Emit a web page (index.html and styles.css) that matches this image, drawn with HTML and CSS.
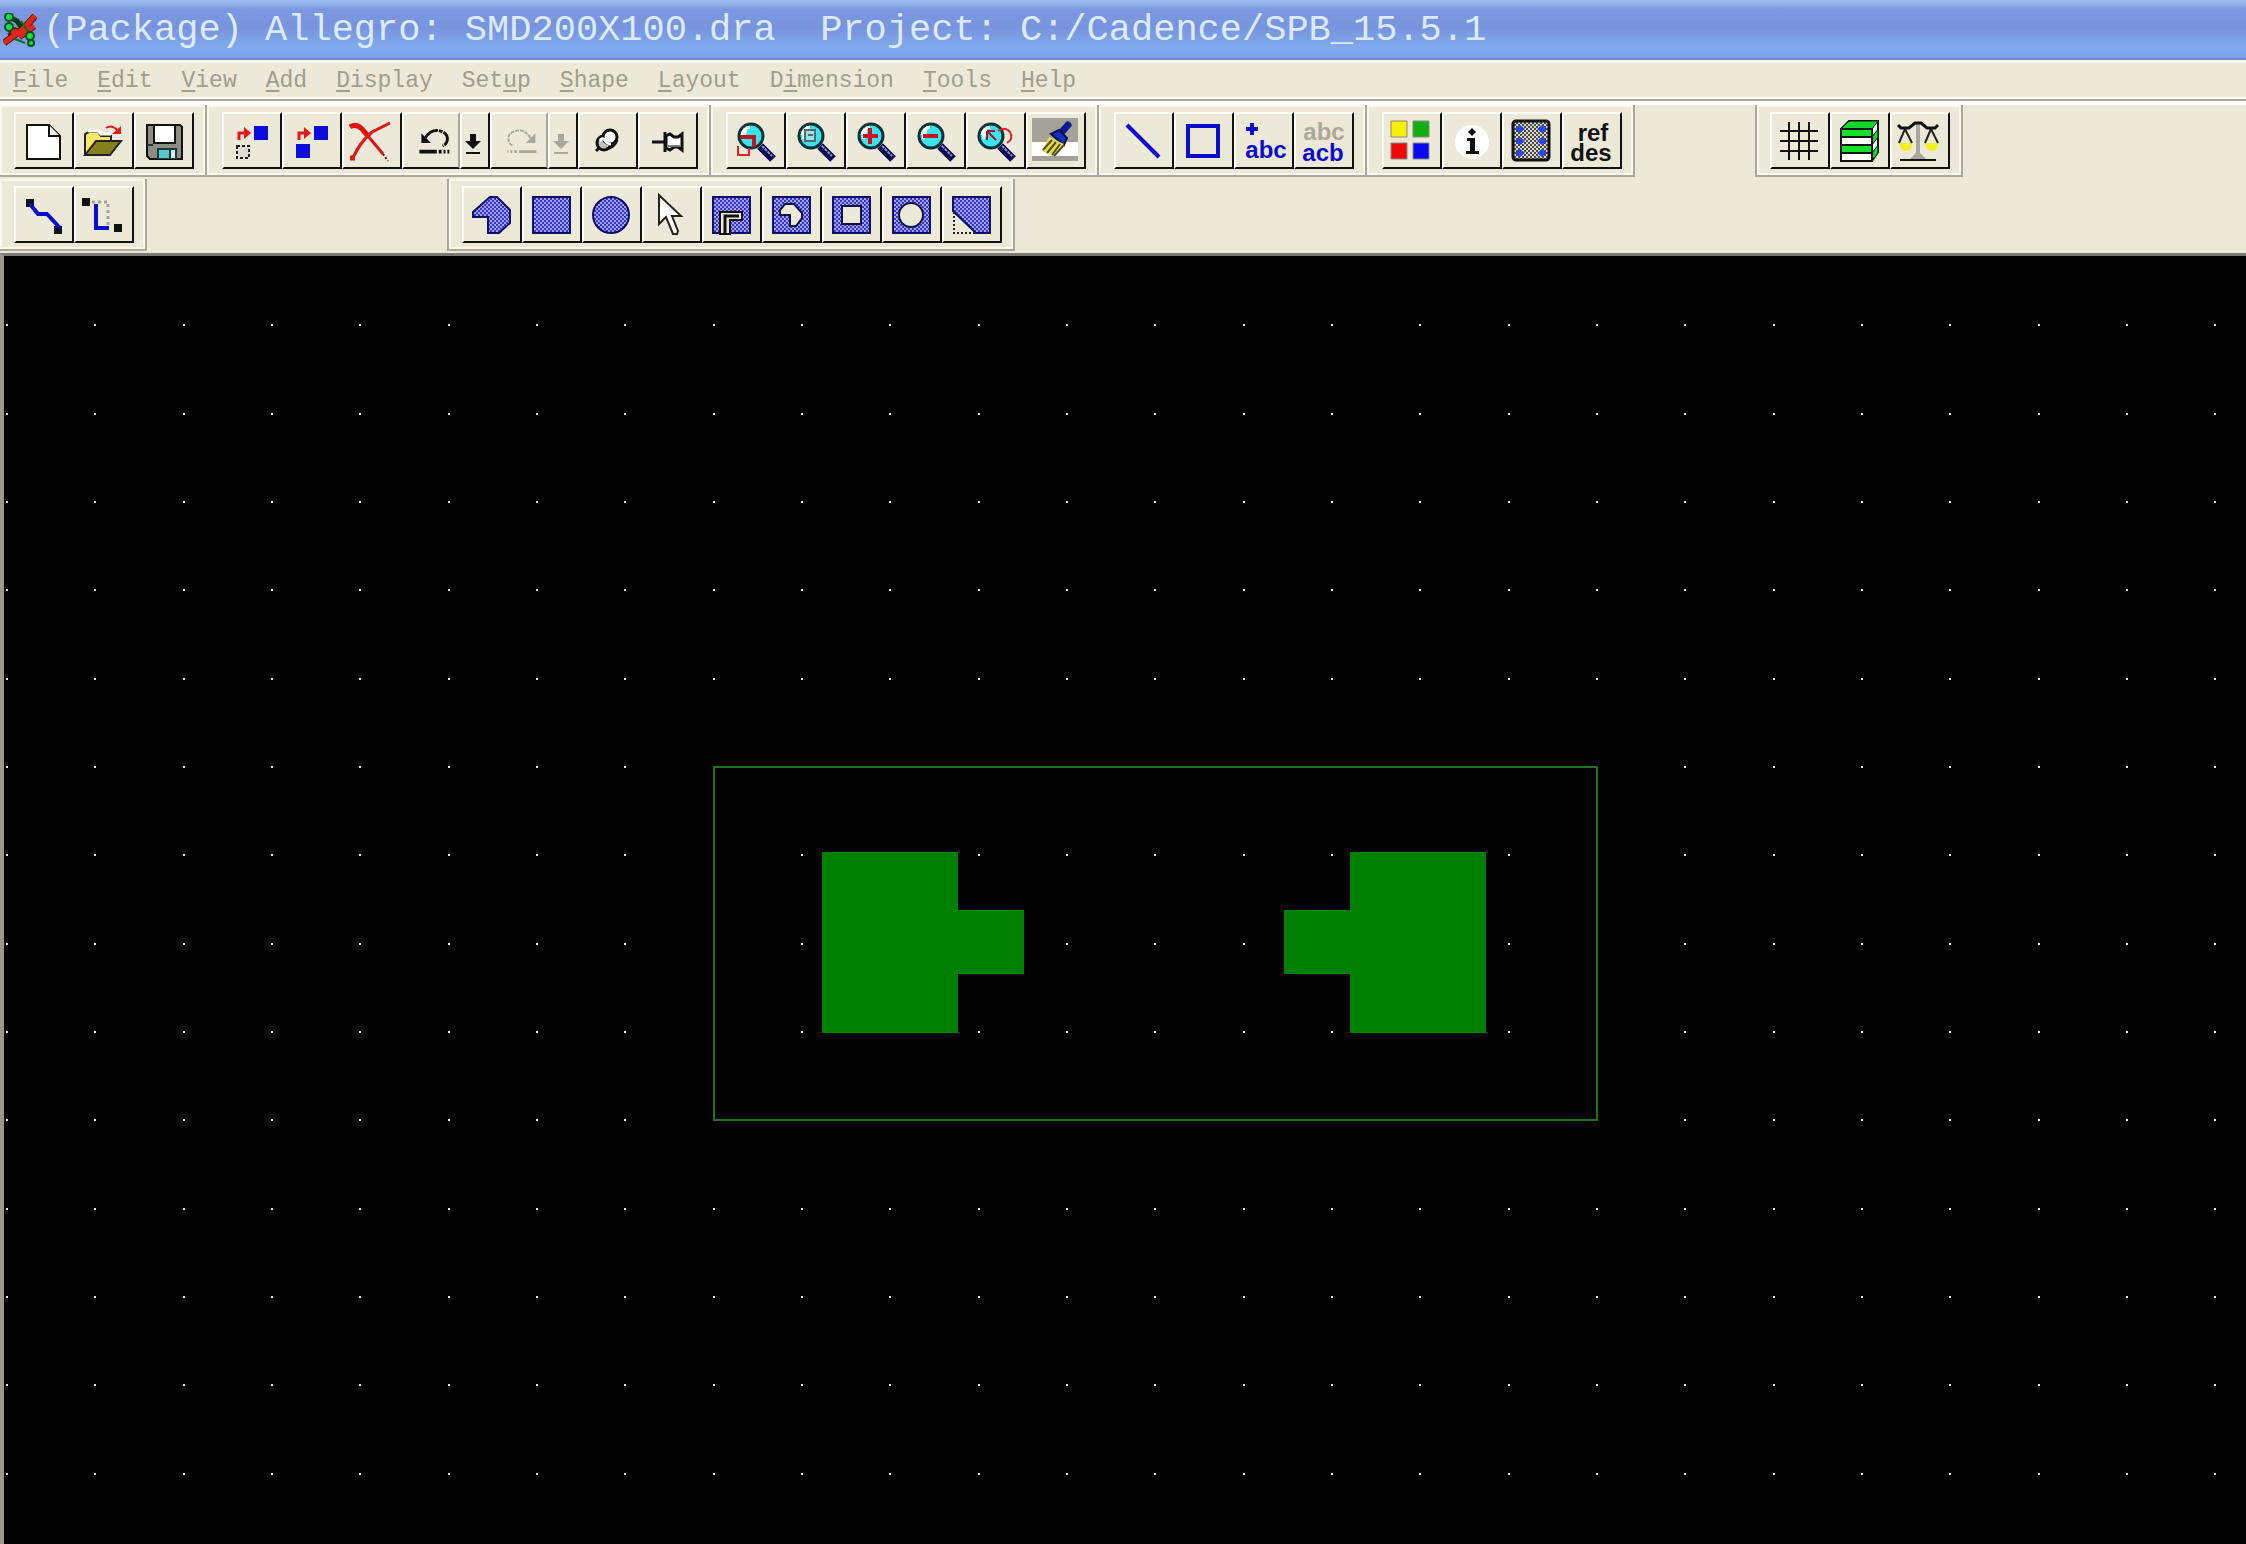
FILE: index.html
```html
<!DOCTYPE html>
<html lang="en">
<head>
<meta charset="utf-8">
<meta name="viewport" content="width=device-width, initial-scale=1">
<title>(Package) Allegro: SMD200X100.dra</title>
<link rel="stylesheet" href="styles.css">
</head>
<body>
<svg class="defs" width="0" height="0" aria-hidden="true">
  <defs>
    <pattern id="mesh" width="4" height="4" patternUnits="userSpaceOnUse">
      <rect width="4" height="4" fill="#a4a4f2"/>
      <path d="M0 0h2v2H0zM2 2h2v2H2z" fill="#3434dc"/>
    </pattern>
    <pattern id="chipmesh" width="4" height="4" patternUnits="userSpaceOnUse">
      <rect width="4" height="4" fill="#d8d6c8"/>
      <path d="M0 0h2v2H0zM2 2h2v2H2z" fill="#4a4a48"/>
    </pattern>
    <symbol id="lens" viewBox="2 2 56 53">
      <path d="M34 34L47 47" stroke="#0c0c50" stroke-width="8"/>
      <path d="M36 34L46 44" stroke="#8c8cc8" stroke-width="2" stroke-dasharray="3 1"/>
      <circle cx="25" cy="24" r="12" fill="#38e4f0" stroke="#0a3038" stroke-width="3"/>
      <path d="M16 23a9 9 0 0 1 8-8M17 27l3-9" stroke="#fff" stroke-width="3" fill="none"/>
    </symbol>
  </defs>
</svg>
<div class="app">
  <header class="titlebar">
    <svg class="appicon" viewBox="0 0 34 34" aria-hidden="true">
      <path d="M6 4l8 4 14 20M5 15l8 10" stroke="#063c10" stroke-width="5" fill="none"/>
      <path d="M32 3L20 16 1 30M7 17l20 4M31 13L16 24M6 24l12-6" stroke="#5c1408" stroke-width="7"/>
      <path d="M32 3L20 16 1 30M8 18l18 3M31 13L16 24" stroke="#e02818" stroke-width="5"/>
      <path d="M18 8l8 12M12 26l10 4" stroke="#0a6a20" stroke-width="2"/>
      <g fill="#20d848" stroke="#06501a" stroke-width="2"><circle cx="6" cy="4" r="4"/><circle cx="6" cy="14" r="4"/><circle cx="27" cy="23" r="4"/><circle cx="28" cy="30" r="3"/></g>
    </svg>
    <h1 class="title">(Package) Allegro: SMD200X100.dra&nbsp; Project: C:/Cadence/SPB_15.5.1</h1>
  </header>
  <nav class="menubar" aria-label="Main menu">
    <button class="menu"><u>F</u>ile</button>
    <button class="menu"><u>E</u>dit</button>
    <button class="menu"><u>V</u>iew</button>
    <button class="menu"><u>A</u>dd</button>
    <button class="menu"><u>D</u>isplay</button>
    <button class="menu">Set<u>u</u>p</button>
    <button class="menu"><u>S</u>hape</button>
    <button class="menu"><u>L</u>ayout</button>
    <button class="menu">D<u>i</u>mension</button>
    <button class="menu"><u>T</u>ools</button>
    <button class="menu"><u>H</u>elp</button>
  </nav>

  <div class="toolrow">
    <div class="group" role="toolbar" aria-label="File">
      <button class="tool" aria-label="New"><svg viewBox="2 2 56 53"><path d="M13 13h22l11 11v23H13z" fill="#fff" stroke="#111" stroke-width="2"/><path d="M35 13v11h11" fill="#eee" stroke="#111" stroke-width="2"/></svg></button>
      <button class="tool" aria-label="Open"><svg viewBox="2 2 56 53"><path d="M11 43V22l4-2h9l3 4h10v6" fill="#f4e868" stroke="#222" stroke-width="2"/><path d="M14 19h10l3 3h10" stroke="#fff" stroke-width="3" fill="none"/><path d="M11 43l11-14h25L36 43z" fill="#84801c" stroke="#222" stroke-width="2"/><path d="M32 16q6-4 12 3" fill="none" stroke="#e01818" stroke-width="2"/><path d="M47 14v8h-9z" fill="#e01818"/></svg></button>
      <button class="tool" aria-label="Save"><svg viewBox="2 2 56 53"><path d="M13 13h33l2 2v32H16l-3-3z" fill="#8c8c84" stroke="#111" stroke-width="2"/><path d="M20 13h21v18H20z" fill="#fff" stroke="#111" stroke-width="2"/><path d="M23 36h20v11H23z" fill="#163c40"/><path d="M25 38h10v8H25z" fill="#58c8cc"/><path d="M37 38h4v8h-4z" fill="#d8f0f0"/><path d="M13 33h6" stroke="#333" stroke-width="2"/></svg></button>
    </div>
    <div class="group" role="toolbar" aria-label="Edit">
      <button class="tool" aria-label="Move"><svg viewBox="2 2 56 53"><path d="M17 28v-7h6" fill="none" stroke="#e81818" stroke-width="3"/><path d="M22 15l7 6-7 6z" fill="#e81818"/><path d="M32 14h14v14H32z" fill="#0c0cdc"/><path d="M15 34h12v12H15z" fill="#dedccf" stroke="#222" stroke-width="2" stroke-dasharray="3 2"/></svg></button>
      <button class="tool" aria-label="Copy"><svg viewBox="2 2 56 53"><path d="M17 28v-7h6" fill="none" stroke="#e81818" stroke-width="3"/><path d="M22 15l7 6-7 6z" fill="#e81818"/><path d="M32 14h14v14H32zM14 32h14v14H14z" fill="#0c0cdc"/></svg></button>
      <button class="tool" aria-label="Delete"><svg viewBox="2 2 56 53"><g fill="none" stroke="#e01414"><path d="M8 15q6-4 12 2l7 8" stroke-width="5"/><path d="M26 24l15 18" stroke-width="3"/><path d="M48 11L30 20Q18 30 11 46" stroke-width="3"/><path d="M8 46h5" stroke-width="5"/><path d="M41 42l5 7" stroke="#611" stroke-width="2" stroke-dasharray="2 2"/></g></svg></button>
      <button class="tool split" aria-label="Undo"><svg viewBox="2 2 56 53"><path d="M24 26q5-8 12-8 11 1 11 9 0 5-5 7" fill="none" stroke="#111" stroke-width="3" stroke-dasharray="16 1 4 1"/><path d="M20 21v10h10z" fill="#111"/><path d="M18 40h18M38 40h3M43 40h2M47 40h2" stroke="#111" stroke-width="4"/></svg></button>
      <button class="tool narrow" aria-label="Undo list"><svg viewBox="2 2 26 53"><path d="M10 22h6v7h5l-8 8-8-8h5zM6 40h14v2H6z" fill="#111"/></svg></button>
      <button class="tool split off" aria-label="Redo"><svg viewBox="2 2 56 53"><path d="M42 26q-5-8-12-8-11 1-11 9 0 5 5 7" fill="none" stroke="#aaa89a" stroke-width="2" stroke-dasharray="4 1"/><path d="M47 21v10H37z" fill="#aaa89a"/><path d="M30 40h18M25 40h3M21 40h2M18 40h1" stroke="#aaa89a" stroke-width="3"/></svg></button>
      <button class="tool narrow off" aria-label="Redo list"><svg viewBox="2 2 26 53"><path d="M10 22h6v7h5l-8 8-8-8h5zM6 40h14v2H6z" fill="#aaa89a"/></svg></button>
      <button class="tool" aria-label="Unfix"><svg viewBox="2 2 56 53"><path d="M18 39l5-5" stroke="#111" stroke-width="3"/><circle cx="26" cy="31" r="7" fill="#c4c4bc" stroke="#111" stroke-width="3"/><circle cx="32" cy="25" r="7" fill="#fff" stroke="#111" stroke-width="3"/><path d="M22 29q2-4 5-1 1 4 6 4" stroke="#fff" stroke-width="3" fill="none"/><path d="M28 37q8-1 11-9" stroke="#111" stroke-width="3" fill="none"/></svg></button>
      <button class="tool" aria-label="Fix"><svg viewBox="2 2 56 53"><path d="M14 30h13M27 20v20" stroke="#111" stroke-width="3"/><path d="M28 24l4-2 4 3h4l4-3v16l-4-3h-4l-4 3-4-2z" fill="#fff" stroke="#111" stroke-width="3"/><path d="M30 34h12" stroke="#777" stroke-width="2"/></svg></button>
    </div>
    <div class="group" role="toolbar" aria-label="View">
      <button class="tool" aria-label="Zoom by points"><svg viewBox="2 2 56 53"><use href="#lens" x="2" y="2" width="56" height="53"/><path d="M14 25h14v10" fill="none" stroke="#c01420" stroke-width="4"/><path d="M12 34v9h11v-7" fill="none" stroke="#e42020" stroke-width="2"/></svg></button>
      <button class="tool" aria-label="Zoom fit"><svg viewBox="2 2 56 53"><use href="#lens" x="2" y="2" width="56" height="53"/><path d="M19 18h10v11H19z" fill="#8ce8ec" stroke="#5c6468" stroke-width="2"/><path d="M22 23h5" stroke="#566" stroke-width="2"/></svg></button>
      <button class="tool" aria-label="Zoom in"><svg viewBox="2 2 56 53"><use href="#lens" x="2" y="2" width="56" height="53"/><path d="M17 24h15M24 16v16" stroke="#cc1020" stroke-width="4"/></svg></button>
      <button class="tool" aria-label="Zoom out"><svg viewBox="2 2 56 53"><use href="#lens" x="2" y="2" width="56" height="53"/><path d="M17 24h15" stroke="#cc1020" stroke-width="4"/></svg></button>
      <button class="tool" aria-label="Zoom previous"><svg viewBox="2 2 56 53"><use href="#lens" x="2" y="2" width="56" height="53"/><path d="M21 19v9M21 19h8M21 19l9 9" stroke="#a01828" stroke-width="2"/><path d="M32 19q7-5 12 1 4 7-3 11" fill="none" stroke="#e02424" stroke-width="2"/></svg></button>
      <button class="tool" aria-label="Redraw"><svg viewBox="2 2 56 53"><path d="M6 6h46v43H6z" fill="#a4a298"/><path d="M6 30h46v14H6z" fill="#fff"/><path d="M42 13L34 22" stroke="#101890" stroke-width="7" stroke-linecap="round"/><path d="M25 22l8-4 8 8-3 7z" fill="#1430c0" stroke="#0c1050" stroke-width="2"/><path d="M23 25l15 7-10 12-12-5z" fill="#e8dc50"/><path d="M26 28l-9 10M30 30l-9 11M34 32l-8 11M38 33l-10 11" stroke="#55501c" stroke-width="2"/></svg></button>
    </div>
    <div class="group" role="toolbar" aria-label="Add">
      <button class="tool" aria-label="Add line"><svg viewBox="2 2 56 53"><path d="M13 13l32 32" stroke="#0c0cd0" stroke-width="4"/></svg></button>
      <button class="tool" aria-label="Add rectangle"><svg viewBox="2 2 56 53"><path d="M14 14h30v30H14z" fill="none" stroke="#0c0cd0" stroke-width="4"/></svg></button>
      <button class="tool" aria-label="Add text"><svg viewBox="2 2 56 53"><path d="M12 17h12M18 11v12" stroke="#0c0cd0" stroke-width="4"/><text class="glyph blue" x="32" y="46">abc</text></svg></button>
      <button class="tool" aria-label="Edit text"><svg viewBox="2 2 56 53"><text class="glyph gray" x="30" y="28">abc</text><text class="glyph blue" x="29" y="49">acb</text></svg></button>
    </div>
    <div class="group" role="toolbar" aria-label="Display">
      <button class="tool" aria-label="Color"><svg viewBox="2 2 56 53"><g stroke="#888" stroke-width="1"><path d="M9 9h16v16H9z" fill="#f8f000"/><path d="M31 9h16v16H31z" fill="#10b010"/><path d="M9 31h16v16H9z" fill="#f00808"/><path d="M31 31h16v16H31z" fill="#0808f0"/></g></svg></button>
      <button class="tool" aria-label="Show element"><svg viewBox="2 2 56 53"><circle cx="30" cy="30" r="17" fill="#fff"/><path d="M30 16l4 4-4 4-4-4zM25 26h8v13h4v3H24v-3h4V29h-3z" fill="#111"/></svg></button>
      <button class="tool" aria-label="Shadow mode"><svg viewBox="2 2 56 53"><rect x="11" y="9" width="36" height="39" rx="3" fill="url(#chipmesh)" stroke="#111" stroke-width="3"/><path d="M18 13l5 4-5 4-5-4zM18 25l5 4-5 4-5-4zM18 37l5 4-5 4-5-4zM40 13l5 4-5 4-5-4zM40 25l5 4-5 4-5-4zM40 37l5 4-5 4-5-4z" fill="#2448e0"/></svg></button>
      <button class="tool" aria-label="Refdes"><svg viewBox="2 2 56 53"><text class="glyph" x="31" y="29">ref</text><text class="glyph" x="29" y="49">des</text></svg></button>
    </div>
    <div class="group floating" role="toolbar" aria-label="Setup">
      <button class="tool" aria-label="Grid"><svg viewBox="2 2 56 53"><path d="M10 19h38M10 29h38M10 39h38M19 10v38M29 10v38M39 10v38" stroke="#111" stroke-width="2"/></svg></button>
      <button class="tool" aria-label="Cross section"><svg viewBox="2 2 56 53"><path d="M11 17l8-8h29v31l-6 9" fill="#fff" stroke="#111" stroke-width="2"/><path d="M11 17l8-8h29l-6 8v8l6-8v8l-6 8v8l6-8v8l-6 8" fill="#10d828" stroke="#111" stroke-width="1"/><path d="M11 17h31v32H11z" fill="#fff"/><path d="M11 17h31v8H11zM11 33h31v8H11z" fill="#10e428"/><path d="M11 17h31v32H11zM11 25h31M11 33h31M11 41h31" fill="none" stroke="#111" stroke-width="2"/></svg></button>
      <button class="tool" aria-label="Constraints"><svg viewBox="2 2 56 53"><path d="M26 12h4v29l6 6H20l6-6z" fill="#a8a8a0"/><path d="M9 31h13q0 8-6 8t-7-8zM35 31h13q0 8-6 8t-7-8z" fill="#f4f020"/><path d="M15 17L9 31M15 17l7 14M41 17l-6 14M41 17l7 14" stroke="#222" stroke-width="2"/><path d="M8 13l3 3h8l6-5h6l6 5h8l3-3" fill="none" stroke="#111" stroke-width="3"/><path d="M10 48h36" stroke="#111" stroke-width="2"/></svg></button>
    </div>
  </div>

  <div class="toolrow">
    <div class="group" role="toolbar" aria-label="Route">
      <button class="tool" aria-label="Add connect"><svg viewBox="2 2 56 53"><path d="M12 13h8v8h-8zM40 40h8v8h-8z" fill="#111"/><path d="M16 18l8 10h9l13 14" fill="none" stroke="#0c0cd0" stroke-width="4"/></svg></button>
      <button class="tool" aria-label="Slide"><svg viewBox="2 2 56 53"><path d="M8 12h8v8H8zM40 38h8v8h-8z" fill="#111"/><path d="M18 16h16v26" fill="none" stroke="#a4a29a" stroke-width="3" stroke-dasharray="3 3"/><path d="M22 18v24h13" fill="none" stroke="#0c0cd0" stroke-width="4"/></svg></button>
    </div>
    <div class="group shapes" role="toolbar" aria-label="Shape">
      <button class="tool" aria-label="Shape polygon"><svg viewBox="2 2 56 53"><path d="M28 11h7l13 13v13L37 47H26V31H11v-5z" fill="url(#mesh)" stroke="#101060" stroke-width="2"/></svg></button>
      <button class="tool" aria-label="Shape rectangle"><svg viewBox="2 2 56 53"><path d="M11 11h37v36H11z" fill="url(#mesh)" stroke="#101060" stroke-width="2"/></svg></button>
      <button class="tool" aria-label="Shape circle"><svg viewBox="2 2 56 53"><circle cx="29" cy="29" r="18" fill="url(#mesh)" stroke="#101060" stroke-width="2"/></svg></button>
      <button class="tool" aria-label="Shape select"><svg viewBox="2 2 56 53"><path d="M17 9v29l7-7 7 17h4l1-3-6-15h9z" fill="#fff" stroke="#222" stroke-width="2"/></svg></button>
      <button class="tool" aria-label="Shape void element"><svg viewBox="2 2 56 53"><path d="M11 11h37v36H11z" fill="url(#mesh)" stroke="#101060" stroke-width="2"/><path d="M18 48V26h22v8H28v14z" fill="#ece9d8" stroke="#111" stroke-width="2"/><path d="M23 48V30h14" fill="none" stroke="#111" stroke-width="3"/></svg></button>
      <button class="tool" aria-label="Shape void polygon"><svg viewBox="2 2 56 53"><path d="M11 11h37v36H11z" fill="url(#mesh)" stroke="#101060" stroke-width="2"/><path d="M18 24l5-6h9l8 9v5l-6 8h-6V29H18z" fill="#ece9d8" stroke="#101040" stroke-width="2"/></svg></button>
      <button class="tool" aria-label="Shape void rectangle"><svg viewBox="2 2 56 53"><path d="M11 11h37v36H11z" fill="url(#mesh)" stroke="#101060" stroke-width="2"/><path d="M20 20h19v18H20z" fill="#ece9d8" stroke="#101040" stroke-width="2"/></svg></button>
      <button class="tool" aria-label="Shape void circle"><svg viewBox="2 2 56 53"><path d="M11 11h37v36H11z" fill="url(#mesh)" stroke="#101060" stroke-width="2"/><circle cx="29" cy="29" r="12" fill="#ece9d8" stroke="#101040" stroke-width="2"/></svg></button>
      <button class="tool" aria-label="Shape edit boundary"><svg viewBox="2 2 56 53"><path d="M11 11h37v36H34L11 25z" fill="url(#mesh)" stroke="#101060" stroke-width="2"/><path d="M12 26v21h22" fill="none" stroke="#222" stroke-width="2" stroke-dasharray="2 2"/></svg></button>
    </div>
  </div>

  <main class="canvas">
    <svg class="drawing" role="img" aria-label="Package symbol SMD200X100">
      <defs>
        <pattern id="grid" x="2" y="68" width="265" height="265" patternUnits="userSpaceOnUse">
          <path d="M0 0h2v2H0zM88 0h2v2h-2zM177 0h2v2h-2zM0 89h2v2H0zM88 89h2v2h-2zM177 89h2v2h-2zM0 177h2v2H0zM88 177h2v2h-2zM177 177h2v2h-2z" fill="#e4e4e4"/>
        </pattern>
      </defs>
      <rect y="60" width="100%" height="100%" fill="url(#grid)"/>
      <rect x="710" y="511" width="883" height="353" fill="none" stroke="#1f701f" stroke-width="2"/>
      <path d="M818 596h136v58h66v64h-66v59H818zM1482 596h-136v58h-66v64h66v59h136z" fill="#008000"/>
    </svg>
  </main>
</div>
</body>
</html>
```
FILE: styles.css
```css
* { box-sizing: border-box; }

body {
  margin: 0;
  background: #ece9d8;
}

button {
  font: inherit;
  color: inherit;
  margin: 0;
  padding: 0;
  background: none;
  border: 0;
}

.defs { position: absolute; }

.app {
  display: flex;
  flex-direction: column;
  min-height: 100vh;
  font-family: "Liberation Mono", "Courier New", monospace;
}

.titlebar {
  display: flex;
  align-items: center;
  height: 60px;
  padding: 0 3px;
  gap: 6px;
  background: linear-gradient(#9ab8ec 0, #98b4ec 4px, #7c98e0 9px, #7894de 28px, #80a8ea 46px, #80a6ea 56px, #6484cc 60px);
}

.appicon {
  width: 34px;
  height: 34px;
  flex: none;
}

.title {
  margin: 0;
  font-size: 37px;
  line-height: 44px;
  font-weight: normal;
  color: #dcebff;
  white-space: nowrap;
}

.menubar {
  display: flex;
  align-items: center;
  gap: 29px;
  height: 45px;
  padding: 0 13px 3px;
  border-top: 3px solid #faf8ee;
  border-bottom: 4px solid #fffef8;
  background: linear-gradient(#ece9d8 34px, #fffef8 34px, #fffef8 36px, #aca899 36px);
  color: #a09e8c;
  font-size: 23px;
  line-height: 28px;
}

.menu u {
  text-decoration-thickness: 2px;
  text-underline-offset: 3px;
}

.toolrow {
  display: flex;
  height: 74px;
  padding-bottom: 2px;
}

.group {
  display: flex;
  flex: none;
  padding: 7px 11px 6px 15px;
  border-right: 2px solid #aca899;
  border-bottom: 2px solid #aca899;
  box-shadow: inset 2px 2px #faf8ee, inset -2px -2px #faf8ee;
}

.group:first-child { padding-left: 14px; }

.floating,
.shapes {
  padding-left: 13px;
  border-left: 2px solid #aca899;
}

.floating { margin-left: 120px; }

.shapes { margin-left: 300px; }

.tool {
  width: 60px;
  height: 57px;
  border: 2px solid;
  border-color: #fffef8 #111 #111 #fffef8;
  background: #ece9d8;
}

.tool svg {
  display: block;
  width: 100%;
  height: 100%;
}

.tool.split {
  width: 58px;
  border-right-color: #aca899;
}

.tool.narrow { width: 30px; }

.glyph {
  font: bold 24px "Liberation Sans", Arial, sans-serif;
  text-anchor: middle;
  fill: #111;
}

.glyph.blue { fill: #0c0cd0; }

.glyph.gray { fill: #aaa89a; }

.canvas {
  display: flex;
  flex: 1;
  min-height: 600px;
  border-top: 3px solid #7c7a70;
  border-left: 4px solid #9c998c;
  background: #000;
}

.drawing {
  flex: 1;
  min-width: 0;
  overflow: hidden;
}
```
